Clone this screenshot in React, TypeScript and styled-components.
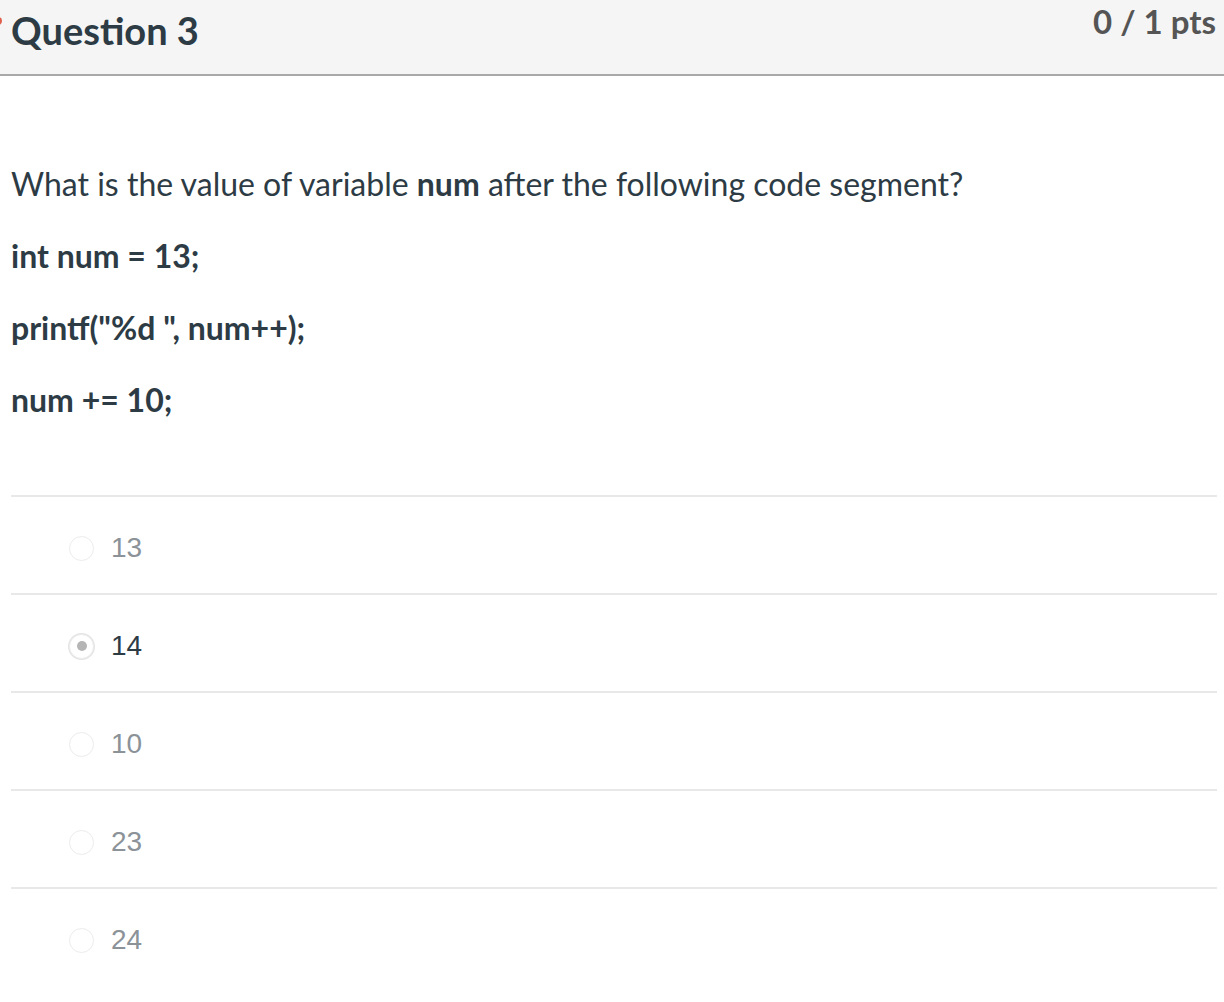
import styled, { createGlobalStyle } from "styled-components";

const GlobalStyle = createGlobalStyle`
  body {
    margin: 0;
    background: #fff;
    font-family: Lato, "Liberation Sans", sans-serif;
  }
`;

const Card = styled.div`
  width: 1224px;
`;

const Header = styled.div`
  position: relative;
  display: flex;
  justify-content: space-between;
  align-items: center;
  height: 76px;
  padding: 0 8px 0 11px;
  background: #f5f5f5;
  border-bottom: 2px solid #a9a9a9;
  box-sizing: border-box;
`;

// little red flag marker peeking in at the left edge
const Flag = styled.span`
  position: absolute;
  left: -6px;
  top: 17px;
  width: 8px;
  height: 8px;
  border-radius: 50%;
  background: #e0604c;
`;

const Title = styled.h2`
  margin: 0 0 14px;
  font-size: 38px;
  font-weight: 700;
  color: #2d3b45;
`;

const Points = styled.div`
  margin-bottom: 32px;
  font-size: 33px;
  font-weight: 700;
  color: #555;
`;

const Body = styled.div`
  padding: 90px 7px 0 11px;
`;

const Para = styled.p`
  margin: 0 0 37px;
  font-size: 32px;
  line-height: 35px;
  color: #2d3b45;
`;

const Code = styled(Para)`
  font-weight: 700;
`;

const Answers = styled.div`
  margin-top: 78px;
`;

const Answer = styled.div`
  display: flex;
  align-items: center;
  height: 98px;
  box-sizing: border-box;
  border-top: 2px solid #e8e8e8;
  padding: 6px 0 0 58px;
`;

const Radio = styled.span<{ $checked?: boolean }>`
  display: flex;
  align-items: center;
  justify-content: center;
  width: 25px;
  height: 25px;
  border-radius: 50%;
  border: 1px solid #ececec;
  background: #fff;
  box-sizing: border-box;
  margin-right: 17px;
  box-shadow: ${(p) => (p.$checked ? "0 0 0 1px #e4e4e4" : "none")};

  &::after {
    content: "";
    display: ${(p) => (p.$checked ? "block" : "none")};
    width: 10px;
    height: 10px;
    border-radius: 50%;
    background: #b5b5b5;
  }
`;

const AnswerText = styled.span<{ $checked?: boolean }>`
  font-family: "Liberation Sans", Arial, sans-serif;
  font-size: 28px;
  color: ${(p) => (p.$checked ? "#2d3b45" : "#8b9298")};
`;

const answers = [
  { label: "13" },
  { label: "14", checked: true },
  { label: "10" },
  { label: "23" },
  { label: "24" },
];

export default function App() {
  return (
    <>
      <GlobalStyle />
      <Card>
        <Header>
          <Flag />
          <Title>Question 3</Title>
          <Points>0 / 1 pts</Points>
        </Header>
        <Body>
          <Para>
            What is the value of variable <b>num</b> after the following code segment?
          </Para>
          <Code>int num = 13;</Code>
          <Code>printf("%d ", num++);</Code>
          <Code>num += 10;</Code>
          <Answers>
            {answers.map((a) => (
              <Answer key={a.label}>
                <Radio $checked={a.checked} />
                <AnswerText $checked={a.checked}>{a.label}</AnswerText>
              </Answer>
            ))}
          </Answers>
        </Body>
      </Card>
    </>
  );
}
